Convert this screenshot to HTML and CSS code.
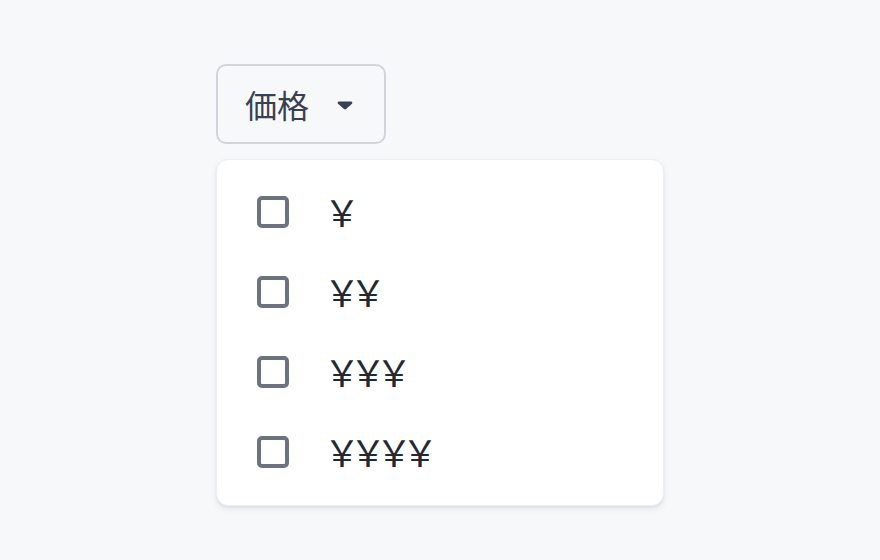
FILE: index.html
```html
<!DOCTYPE html>
<html lang="ja">
<head>
<meta charset="utf-8">
<link rel="stylesheet" href="styles.css">
</head>
<body>
<div class="wrap">
  <button class="trigger">
    <span class="label">価格</span>
    <svg class="caret" width="16" height="10" viewBox="0 0 16 10"><path d="M2 1.5h12c1.2 0 1.8 1.4 1 2.3l-6 5.2c-.6.5-1.4.5-2 0l-6-5.2c-.8-.9-.2-2.3 1-2.3z" fill="#374151"/></svg>
  </button>
  <div class="menu">
    <label class="row"><span class="box"></span><span class="txt">￥</span></label>
    <label class="row"><span class="box"></span><span class="txt">￥￥</span></label>
    <label class="row"><span class="box"></span><span class="txt">￥￥￥</span></label>
    <label class="row"><span class="box"></span><span class="txt">￥￥￥￥</span></label>
  </div>
</div>
</body>
</html>
```
FILE: styles.css
```css
html, body { margin: 0; padding: 0; }
body {
  width: 880px; height: 560px;
  background: #f7f8fa;
  font-family: "Noto Sans CJK JP", "Noto Sans", sans-serif;
}
.wrap {
  padding: 64px 0 0 216px;
  display: flex;
  flex-direction: column;
  align-items: flex-start;
  gap: 15px;
}
.trigger {
  box-sizing: border-box;
  width: 170px; height: 80px;
  border: 2px solid #d1d5db;
  border-radius: 10px;
  background: #f7f8fa;
  display: flex; align-items: center;
  padding: 0 0 0 27px;
  gap: 28px;
  font-family: inherit;
  font-size: 32px;
  color: #374151;
}
.label { line-height: 1; }
.caret { display: block; margin-top: 1px; }
.menu {
  box-sizing: border-box;
  width: 448px;
  background: #fff;
  border: 1px solid #eceef1;
  border-radius: 12px;
  box-shadow: 0 3px 6px rgba(0,0,0,0.08), 0 1px 2px rgba(0,0,0,0.06);
  padding: 12px 0 13px 40px;
  display: flex; flex-direction: column;
}
.row {
  height: 80px;
  display: flex; align-items: center;
  gap: 35px;
}
.box {
  box-sizing: border-box;
  width: 32px; height: 32px;
  border: 4px solid #6b7280;
  border-radius: 5px;
  background: #fff;
}
.txt {
  font-size: 36px;
  letter-spacing: -10px;
  color: #1f2937;
  line-height: 1;
  margin-top: -3px;
}
```
